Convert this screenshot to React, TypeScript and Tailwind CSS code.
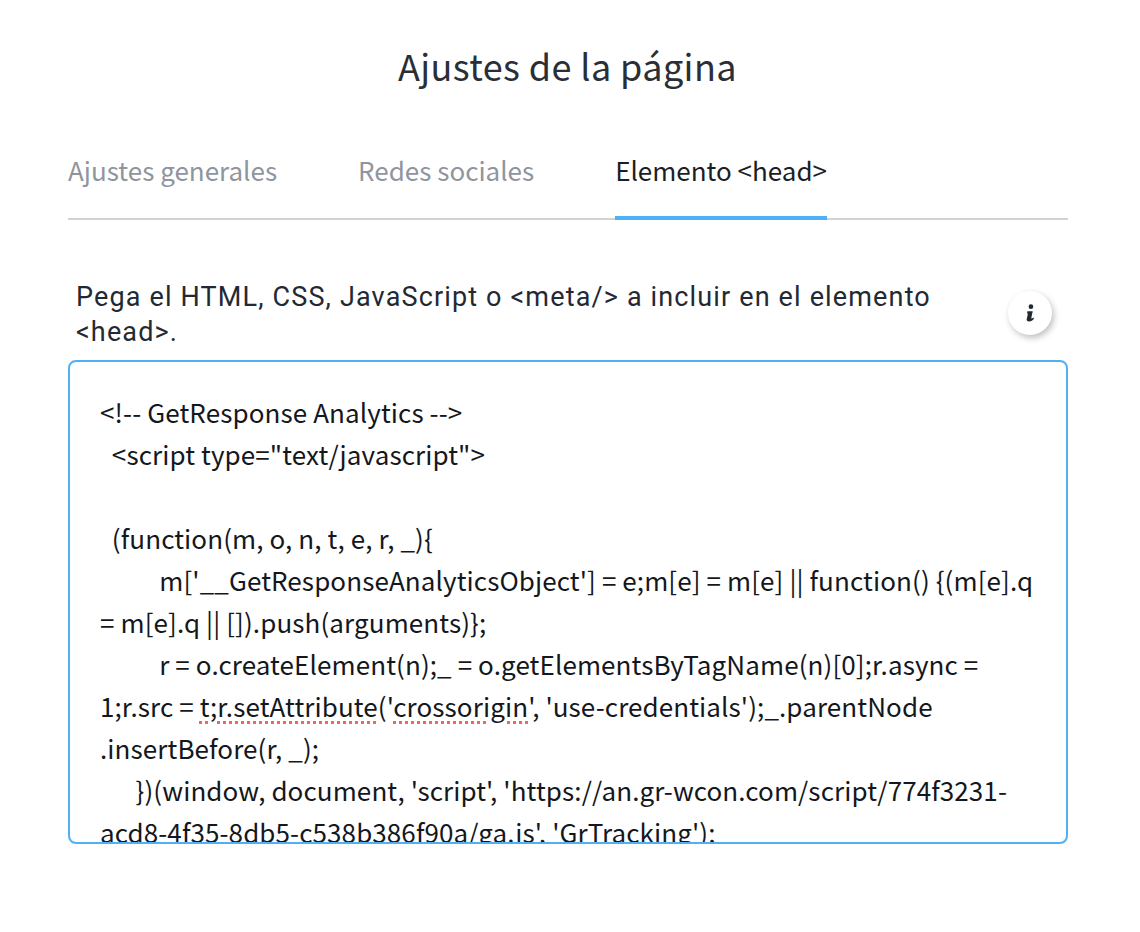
import React from 'react';

const sans = 'font-["Noto_Sans_CJK_JP","Noto_Sans",sans-serif]';

const Tab = ({ label, active }: { label: string; active?: boolean }) => (
  <div
    className={`h-[74px] pt-[5px] text-[26px] leading-[38px] -mb-[2px] border-b-[4px] ${
      active ? 'text-[#1b1e24] border-[#4fb0f6]' : 'text-[#8f959e] border-transparent'
    }`}
  >
    {label}
  </div>
);

const App: React.FC = () => {
  return (
    <div className={`w-[1140px] h-[932px] bg-white overflow-hidden ${sans}`}>
      <h1 className="pt-[38px] pr-[5px] text-center text-[36px] leading-[54px] font-normal tracking-[0.4px] text-[#2a2f37]">
        Ajustes de la página
      </h1>

      <div className="mx-[68px] mt-[54px] w-[1000px]">
        <div className="flex gap-[81px] h-[74px] border-b-2 border-[#d2d2d2]">
          <Tab label="Ajustes generales" />
          <Tab label="Redes sociales" />
          <Tab label={'Elemento <head>'} active />
        </div>

        <div className="flex items-center justify-between mt-[60px] pl-[8px] pr-[16px]">
          <p className="w-[880px] font-['Roboto',sans-serif] text-[27px] leading-[35px] tracking-[1.15px] text-[#232933]">
            Pega el HTML, CSS, JavaScript o &lt;meta/&gt; a incluir en el elemento &lt;head&gt;.
          </p>
          <button className="mb-[4px] flex items-center justify-center w-[44px] h-[44px] rounded-full bg-white shadow-[2px_3px_6px_rgba(0,0,0,0.25)]">
            <svg width="9" height="20" viewBox="0 0 10 20" fill="#232933">
              <circle cx="5.5" cy="3" r="2.6" />
              <path d="M1.5 8h6l-1.6 7.4c-.1.6.4.8 1 .4l1.4-.8.5 1.4C7.400 18.300 5.500 19.500 3.400 19.500c-2 0-3-1.100-2.600-2.800L2.200 10.500l-1 .2z" />
            </svg>
          </button>
        </div>

        <div className="mt-[10px] h-[484px] overflow-hidden rounded-[8px] border-2 border-[#4fb0f6] px-[30px] pt-[29px] text-[26px] leading-[42px] tracking-[0.1px] text-[#14171c] whitespace-pre-wrap">
          <div>{'<!-- GetResponse Analytics -->'}</div>
          <div>{'  <script type="text/javascript">'}</div>
          <div>{'\u00a0'}</div>
          <div>{'  (function(m, o, n, t, e, r, _){'}</div>
          <div>{"          m['__GetResponseAnalyticsObject'] = e;m[e] = m[e] || function() {(m[e].q = m[e].q || []).push(arguments)};"}</div>
          <div>{'          r = o.createElement(n);_ = o.getElementsByTagName(n)[0];r.async ='}</div>
          <div>
            {'1;r.src = '}
            <span className="underline decoration-dotted decoration-[#f0675d] decoration-[3px] underline-offset-4">t;r.setAttribute</span>
            {"('"}
            <span className="underline decoration-dotted decoration-[#f0675d] decoration-[3px] underline-offset-4">crossorigin</span>
            {"', 'use-credentials');_.parentNode"}
          </div>
          <div>{'.insertBefore(r, _);'}</div>
          <div>{"      })(window, document, 'script', 'https://an.gr-wcon.com/script/774f3231-"}</div>
          <div>{"acd8-4f35-8db5-c538b386f90a/ga.js', 'GrTracking');"}</div>
        </div>
      </div>
    </div>
  );
};

export default App;
